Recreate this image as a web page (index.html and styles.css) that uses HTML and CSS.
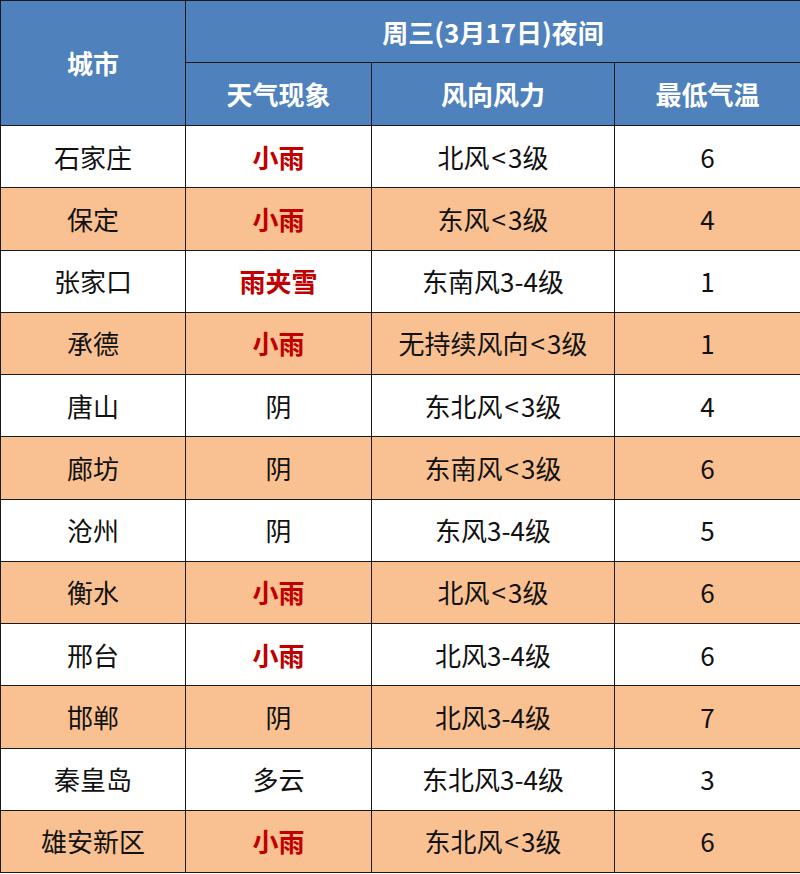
FILE: index.html
```html
<!DOCTYPE html>
<html lang="zh">
<head>
<meta charset="utf-8">
<link rel="stylesheet" href="styles.css">
</head>
<body>
<table class="wx">
  <colgroup>
    <col class="c1"><col class="c2"><col class="c3"><col class="c4">
  </colgroup>
  <thead>
    <tr class="h1">
      <th rowspan="2">城市</th>
      <th colspan="3">周三(3月17日)夜间</th>
    </tr>
    <tr class="h2">
      <th>天气现象</th>
      <th>风向风力</th>
      <th>最低气温</th>
    </tr>
  </thead>
  <tbody>
    <tr><td>石家庄</td><td class="red">小雨</td><td>北风<span class="lt">&lt;</span>3级</td><td>6</td></tr>
    <tr class="alt"><td>保定</td><td class="red">小雨</td><td>东风<span class="lt">&lt;</span>3级</td><td>4</td></tr>
    <tr><td>张家口</td><td class="red">雨夹雪</td><td>东南风3-4级</td><td>1</td></tr>
    <tr class="alt"><td>承德</td><td class="red">小雨</td><td>无持续风向<span class="lt">&lt;</span>3级</td><td>1</td></tr>
    <tr><td>唐山</td><td>阴</td><td>东北风<span class="lt">&lt;</span>3级</td><td>4</td></tr>
    <tr class="alt"><td>廊坊</td><td>阴</td><td>东南风<span class="lt">&lt;</span>3级</td><td>6</td></tr>
    <tr><td>沧州</td><td>阴</td><td>东风3-4级</td><td>5</td></tr>
    <tr class="alt"><td>衡水</td><td class="red">小雨</td><td>北风<span class="lt">&lt;</span>3级</td><td>6</td></tr>
    <tr><td>邢台</td><td class="red">小雨</td><td>北风3-4级</td><td>6</td></tr>
    <tr class="alt"><td>邯郸</td><td>阴</td><td>北风3-4级</td><td>7</td></tr>
    <tr><td>秦皇岛</td><td>多云</td><td>东北风3-4级</td><td>3</td></tr>
    <tr class="alt"><td>雄安新区</td><td class="red">小雨</td><td>东北风<span class="lt">&lt;</span>3级</td><td>6</td></tr>
  </tbody>
</table>
</body>
</html>
```
FILE: styles.css
```css
html, body {
  margin: 0;
  padding: 0;
  background: #ffffff;
}
.wx {
  width: 800px;
  border-collapse: collapse;
  table-layout: fixed;
  font-family: "Noto Sans CJK SC", "Noto Sans", sans-serif;
  font-size: 26px;
  color: #111111;
}
.c1 { width: 185px; }
.c2 { width: 186px; }
.c3 { width: 243px; }
.c4 { width: 186px; }
.wx th, .wx td {
  border: 1px solid #1a1a1a;
  text-align: center;
  vertical-align: middle;
  padding: 0;
  line-height: 1;
}
.wx th {
  background: #4f81bd;
  color: #ffffff;
  font-weight: bold;
}
.h1 th { height: 61px; }
.h2 th { height: 62px; }
.wx td { height: 61.25px; }
.alt td { background: #f9c192; }
.wx td.red {
  color: #c00000;
  font-weight: bold;
}
.lt {
  margin: 0 2px;
}
```
